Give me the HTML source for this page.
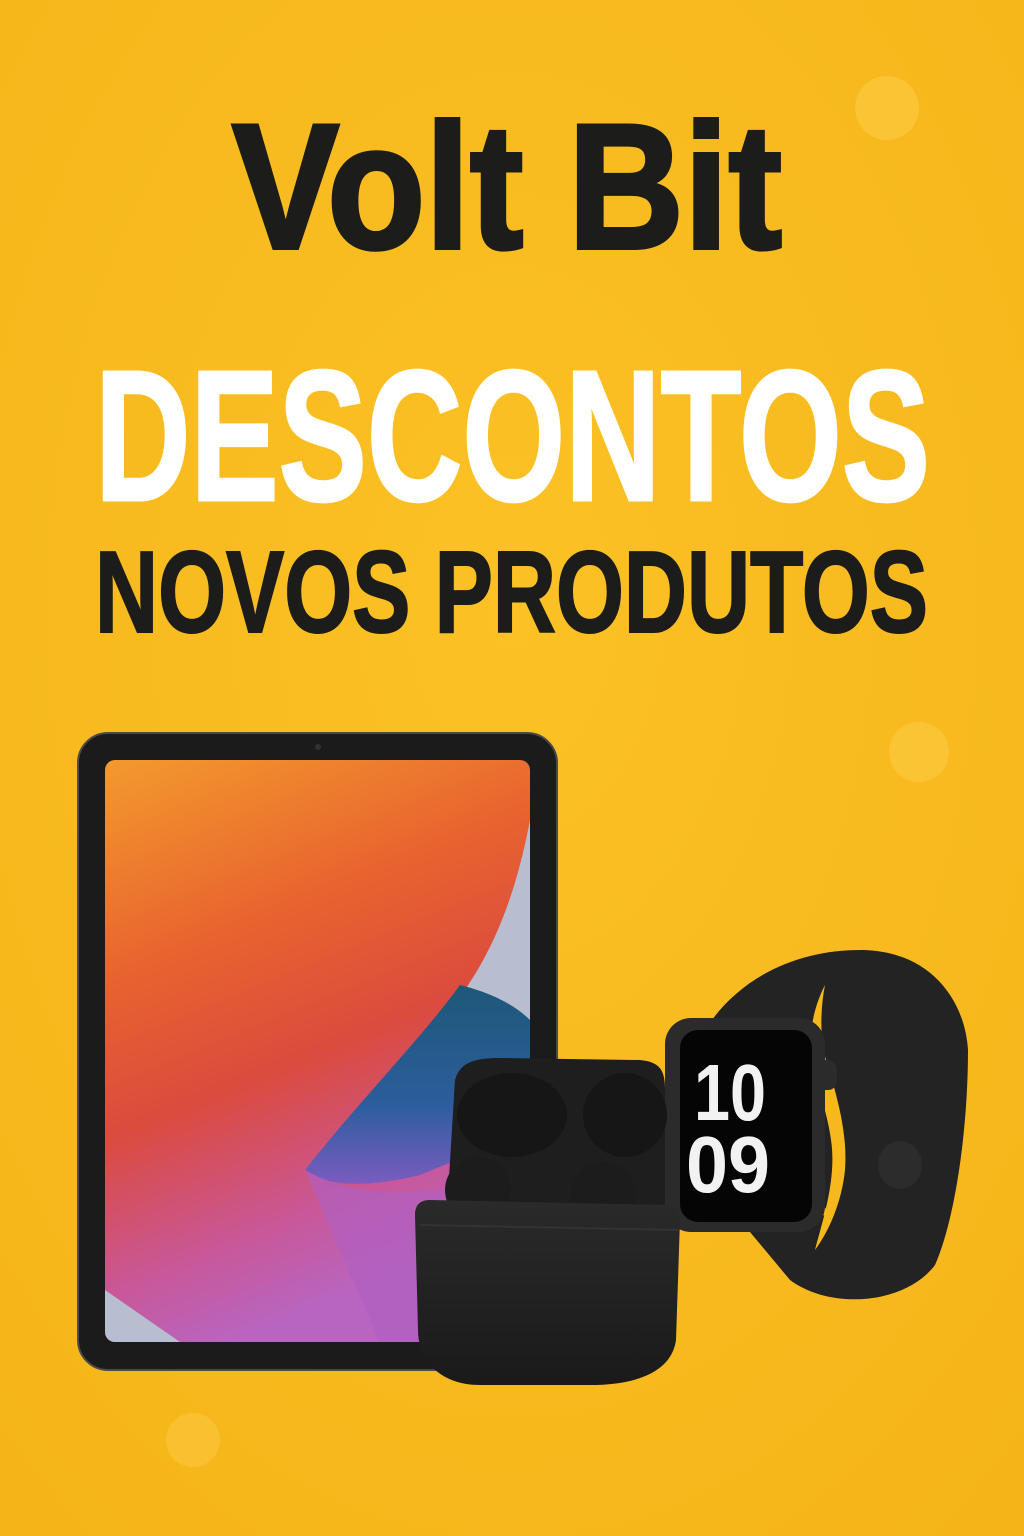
<!DOCTYPE html>
<html><head><meta charset="utf-8"><style>
html,body{margin:0;padding:0;width:1024px;height:1536px;overflow:hidden;background:#F8BC1E}
svg{display:block}
</style></head><body>
<svg width="1024" height="1536" viewBox="0 0 1024 1536" xmlns="http://www.w3.org/2000/svg">
<defs>
<radialGradient id="bg" cx="50%" cy="40%" r="75%"><stop offset="0" stop-color="#FBC125"/><stop offset="1" stop-color="#F5B519"/></radialGradient>
<linearGradient id="wp" x1="0" y1="0" x2="0.3" y2="1"><stop offset="0" stop-color="#F39A2E"/><stop offset="0.35" stop-color="#E8632F"/><stop offset="0.6" stop-color="#DB4B3E"/><stop offset="0.85" stop-color="#C8589A"/><stop offset="1" stop-color="#B865C0"/></linearGradient>
<linearGradient id="blue" x1="0" y1="0" x2="0" y2="1"><stop offset="0" stop-color="#1D5878"/><stop offset="0.6" stop-color="#2C5D9C"/><stop offset="1" stop-color="#7A5CC0"/></linearGradient>
<linearGradient id="blk" x1="0" y1="0" x2="0" y2="1"><stop offset="0" stop-color="#2a2a2a"/><stop offset="1" stop-color="#1a1a1a"/></linearGradient>
</defs>
<rect width="1024" height="1536" fill="url(#bg)"/>
<circle cx="887" cy="108" r="32" fill="#FCCB45" opacity="0.6"/>
<circle cx="919" cy="752" r="30" fill="#FCCB45" opacity="0.6"/>
<circle cx="193" cy="1440" r="27" fill="#FCCB45" opacity="0.5"/>
<text x="232" y="248" font-family="Liberation Sans, sans-serif" font-weight="700" font-size="178" fill="#1c1c1a" stroke="#1c1c1a" stroke-width="4" textLength="550" lengthAdjust="spacingAndGlyphs">Volt Bit</text>
<text x="95" y="500" font-family="Liberation Sans, sans-serif" font-weight="700" font-size="186" fill="#fff" stroke="#fff" stroke-width="3" textLength="835" lengthAdjust="spacingAndGlyphs">DESCONTOS</text>
<text x="95" y="632" font-family="Liberation Sans, sans-serif" font-weight="700" font-size="116" fill="#1c1c1a" stroke="#1c1c1a" stroke-width="2" textLength="833" lengthAdjust="spacingAndGlyphs">NOVOS PRODUTOS</text>
<!-- iPad -->
<rect x="78" y="733" width="479" height="637" rx="30" fill="#1b1b1b" stroke="#4a4a4a" stroke-width="2"/>
<circle cx="318" cy="747" r="3" fill="#333"/>
<clipPath id="scr"><rect x="105" y="760" width="425" height="582" rx="10"/></clipPath>
<g clip-path="url(#scr)">
<rect x="105" y="760" width="425" height="582" fill="url(#wp)"/>
<path d="M530 820 C515 900 490 960 450 1010 L530 1030 Z" fill="#B8BECF"/>
<path d="M460 985 C420 1040 360 1100 305 1170 C330 1190 380 1185 420 1175 L530 1130 L530 1020 C510 1000 480 990 460 985 Z" fill="url(#blue)"/>
<path d="M305 1170 C360 1200 430 1200 530 1170 L530 1342 L380 1342 Z" fill="#B060C0" opacity="0.7"/>
<path d="M105 1290 L180 1342 L105 1342 Z" fill="#B8BECF"/>
</g>
<!-- Watch band -->
<path d="M705 1030 C740 975 800 950 860 950 C930 950 965 1000 968 1050 C968 1130 955 1220 935 1265 C905 1305 830 1310 790 1280 L740 1220 L830 1215 Z" fill="#232323"/>
<path d="M825 985 C812 1010 808 1040 812 1060 C820 1100 835 1130 832 1170 C830 1200 820 1230 815 1250 C830 1230 842 1200 845 1170 C848 1130 835 1090 826 1060 C820 1040 820 1010 825 985 Z" fill="#F6B81C"/>
<ellipse cx="900" cy="1165" rx="22" ry="24" fill="#2c2c2c"/>
<rect x="665" y="1018" width="160" height="214" rx="26" fill="#2b2b2b"/>
<rect x="680" y="1030" width="132" height="192" rx="18" fill="#050505"/>
<rect x="815" y="1060" width="22" height="30" rx="9" fill="#2b2b2b"/>
<text x="730" y="1120" text-anchor="middle" font-family="Liberation Sans, sans-serif" font-weight="700" font-size="80" fill="#f2f2f2" textLength="72" lengthAdjust="spacingAndGlyphs">10</text>
<text x="728" y="1192" text-anchor="middle" font-family="Liberation Sans, sans-serif" font-weight="700" font-size="80" fill="#f2f2f2" textLength="84" lengthAdjust="spacingAndGlyphs">09</text>
<!-- Earbuds case -->
<path d="M455 1080 C460 1062 475 1058 500 1058 L640 1060 C660 1062 665 1070 665 1090 L665 1210 L447 1210 Z" fill="#1e1e1e"/>
<ellipse cx="512" cy="1115" rx="55" ry="42" fill="#161616"/>
<ellipse cx="625" cy="1115" rx="42" ry="42" fill="#161616"/>
<circle cx="478" cy="1190" r="33" fill="#1c1c1c"/>
<circle cx="603" cy="1195" r="33" fill="#1c1c1c"/>
<path d="M415 1215 C415 1205 420 1200 430 1200 L668 1205 C678 1205 680 1212 680 1220 L676 1340 C672 1370 640 1385 590 1385 L480 1385 C440 1385 418 1360 418 1330 Z" fill="url(#blk)"/>
<path d="M420 1225 L678 1230" stroke="#333" stroke-width="2"/>
</svg>
</body></html>
